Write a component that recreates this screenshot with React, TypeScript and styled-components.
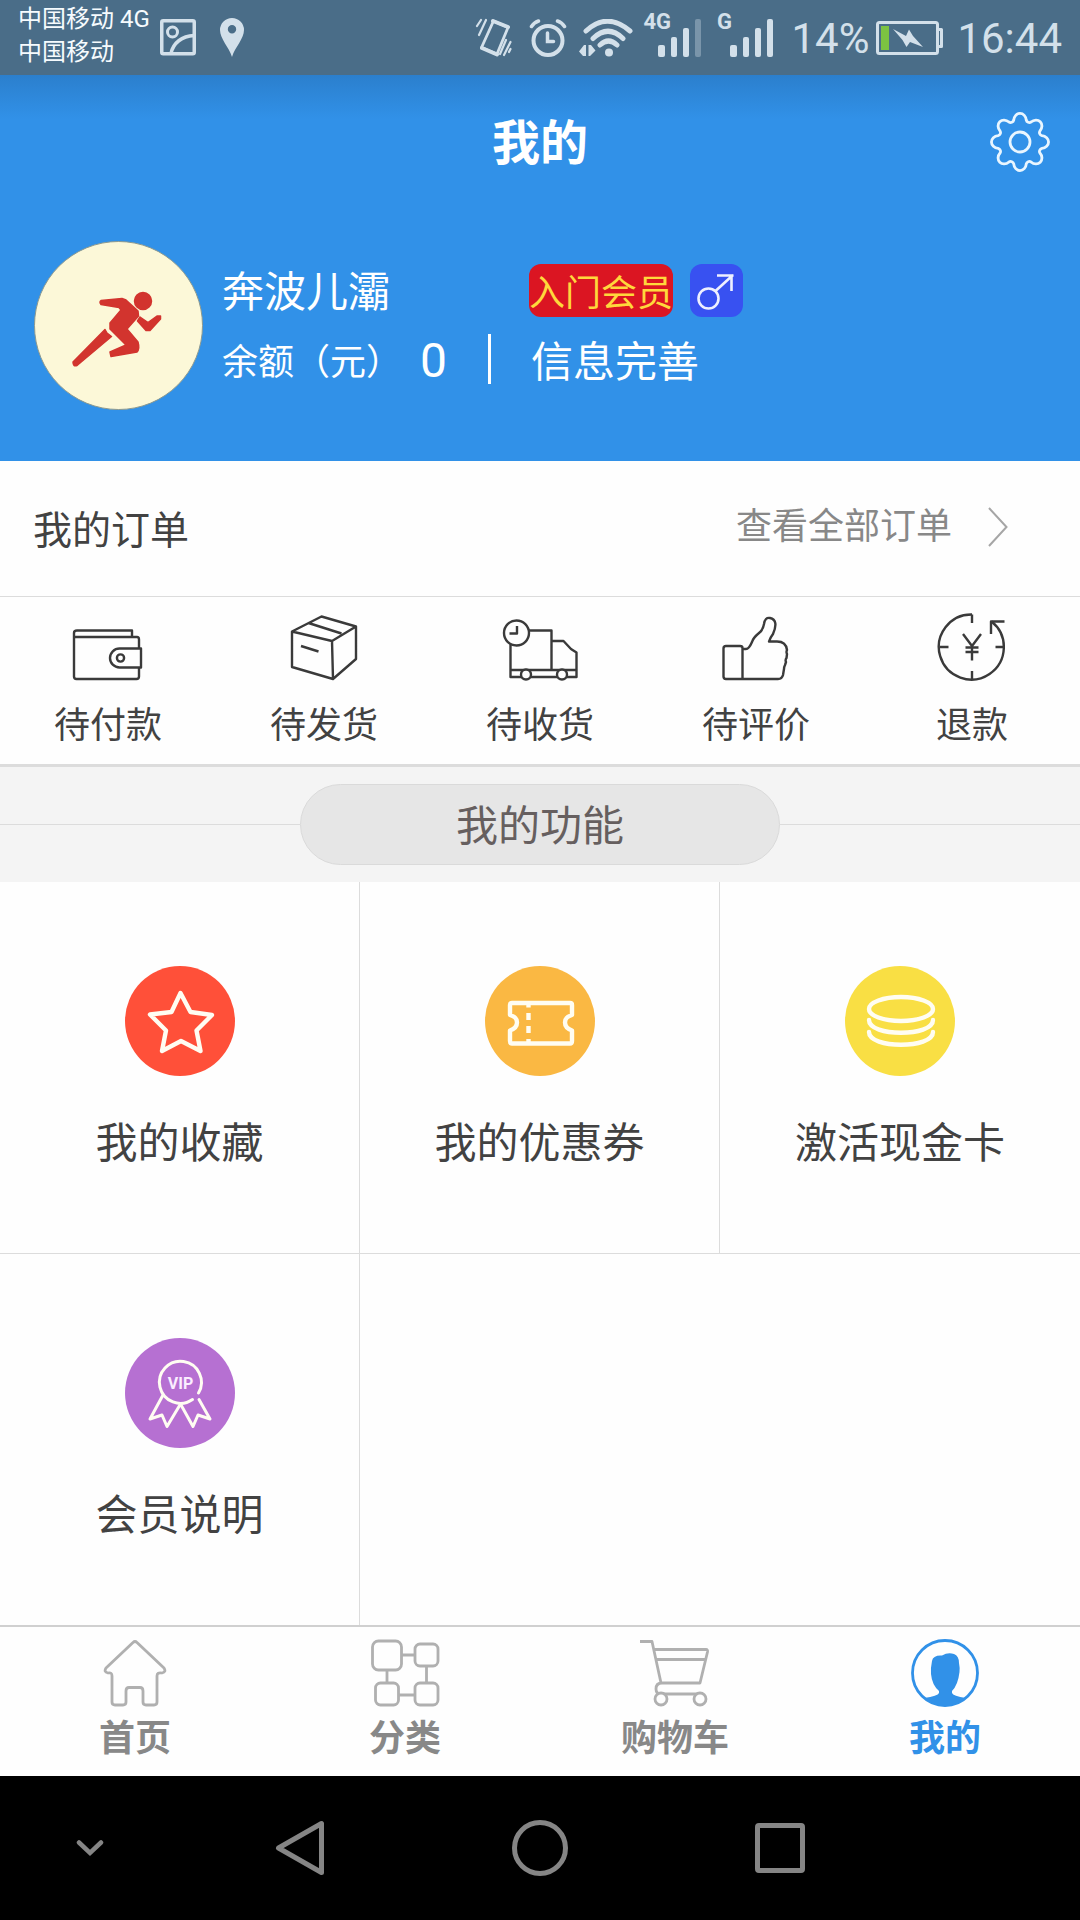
import React from "react";
import styled, { createGlobalStyle } from "styled-components";

const color = {
  brand: "#3191e8",
  ink: "#424242",
  muted: "#888888",
  line: "#dcdcdc",
  surface: "#fefefe",
  status: "#d3e0ea",
};

const GlobalStyle = createGlobalStyle`
  *, *::before, *::after { box-sizing: border-box; }
  body {
    margin: 0;
    background: ${color.surface};
    color: ${color.ink};
    font-family: Roboto, "Noto Sans CJK SC", sans-serif;
  }
  button {
    margin: 0;
    padding: 0;
    border: 0;
    background: none;
    color: inherit;
    font: inherit;
    cursor: pointer;
  }
  a { color: inherit; text-decoration: none; }
  h1, h2, p { margin: 0; font-weight: 400; }
  svg { display: block; flex: none; }
`;

const Page = styled.div`
  display: flex;
  flex-direction: column;
  min-height: 100vh;
`;

/* ---------- status bar ---------- */

const StatusBar = styled.div`
  display: flex;
  align-items: center;
  justify-content: space-between;
  height: 75px;
  padding: 0 18px;
  background: #4a6d88;
  color: ${color.status};
`;

const StatusGroup = styled.div<{ $gap: number }>`
  display: flex;
  align-items: center;
  gap: ${(p) => p.$gap}px;
`;

const Carriers = styled.div`
  padding-bottom: 4px;
  color: #f6fbfe;
  font-size: 24px;
  line-height: 33px;
  white-space: nowrap;
`;

const StatusText = styled.span`
  padding-top: 2px;
  font-size: 42px;
  line-height: 48px;
`;

const Signal = styled.div`
  position: relative;
`;

const SignalLabel = styled.span`
  position: absolute;
  top: -10px;
  left: 0;
  font-size: 22px;
  font-weight: 700;
  line-height: 26px;
`;

/* ---------- header ---------- */

const Header = styled.header`
  padding-bottom: 51px;
  background: linear-gradient(#2b7fcd, ${color.brand} 44px);
  color: #fff;
`;

const TitleBar = styled.div`
  display: grid;
  grid-template-columns: 1fr auto 1fr;
  align-items: center;
  height: 134px;
  padding: 0 29px;
`;

const Title = styled.h1`
  grid-column: 2;
  padding-top: 4px;
  font-size: 48px;
  font-weight: 700;
  line-height: 64px;
`;

const SettingsButton = styled.button`
  justify-self: end;
`;

const Profile = styled.section`
  display: flex;
  align-items: center;
  gap: 19px;
  padding: 32px 34px 0;
`;

const ProfileInfo = styled.div`
  display: grid;
  grid-template-columns: 307px auto;
  row-gap: 12px;
  align-items: center;
  padding-bottom: 2px;
`;

const UserName = styled.p`
  padding-top: 4px;
  font-size: 42px;
  line-height: 52px;
`;

const Badges = styled.div`
  display: flex;
  gap: 17px;
`;

const Level = styled.span`
  height: 53px;
  border-radius: 12px;
  background: #db1522;
  color: #ffd83c;
  font-size: 36px;
  line-height: 60px;
`;

const Gender = styled.span`
  display: grid;
  place-items: center;
  width: 53px;
  height: 53px;
  border-radius: 12px;
  background: #3851f1;
`;

const Balance = styled.p`
  display: flex;
  align-items: center;
  gap: 18px;
  height: 50px;
  margin-right: 38px;
  border-right: 3px solid #fff;
  font-size: 36px;
  white-space: nowrap;
`;

const Amount = styled.span`
  padding-top: 4px;
  font-size: 48px;
  line-height: 46px;
`;

const ProfileLink = styled.a`
  padding: 8px 0 0 2px;
  font-size: 42px;
  line-height: 48px;
`;

/* ---------- orders ---------- */

const OrdersHead = styled.div`
  display: flex;
  align-items: center;
  justify-content: space-between;
  height: 136px;
  padding: 0 72px 0 33px;
  border-bottom: 1px solid ${color.line};
`;

const OrdersTitle = styled.h2`
  padding-top: 4px;
  font-size: 39px;
  line-height: 56px;
`;

const AllOrders = styled.a`
  display: flex;
  align-items: center;
  gap: 36px;
  padding-bottom: 4px;
  color: ${color.muted};
  font-size: 36px;
  line-height: 50px;
`;

const OrderTabs = styled.nav`
  display: grid;
  grid-template-columns: repeat(5, 1fr);
  border-bottom: 3px solid ${color.line};
`;

const OrderTab = styled.a`
  display: flex;
  flex-direction: column;
  align-items: center;
  gap: 19px;
  padding: 15px 0 13px;
  font-size: 36px;
  line-height: 50px;
`;

/* ---------- features ---------- */

const Divider = styled.div`
  display: flex;
  align-items: center;
  padding: 17px 0;
  background: #f4f4f4;

  &::before,
  &::after {
    content: "";
    flex: 1;
    height: 1px;
    background: ${color.line};
  }
`;

const Pill = styled.h2`
  width: 480px;
  padding-top: 5px;
  border: 1px solid #dadada;
  border-radius: 41px;
  background: #e6e6e6;
  color: #665f5f;
  font-size: 42px;
  line-height: 74px;
  text-align: center;
`;

const Features = styled.nav`
  display: grid;
  flex: 1;
  grid-template-columns: repeat(3, 1fr);
`;

const Feature = styled.a<{ $right: boolean; $bottom: boolean }>`
  display: flex;
  flex-direction: column;
  align-items: center;
  gap: 38px;
  padding: 84px 0 79px;
  border-style: solid;
  border-color: ${color.line};
  border-width: 0 ${(p) => (p.$right ? 1 : 0)}px ${(p) => (p.$bottom ? 1 : 0)}px 0;
  font-size: 42px;
  line-height: 60px;
`;

/* ---------- bottom bars ---------- */

const TabBar = styled.nav`
  display: grid;
  grid-template-columns: repeat(4, 1fr);
  border-top: 2px solid #d0d0d0;
`;

const Tab = styled.a<{ $active?: boolean }>`
  display: flex;
  flex-direction: column;
  align-items: center;
  gap: 7px;
  padding: 12px 0;
  color: ${(p) => (p.$active ? color.brand : color.muted)};
  font-size: 36px;
  font-weight: 700;
  line-height: 50px;
`;

const SystemBar = styled.div`
  display: grid;
  grid-template-columns: 3fr 4fr 4fr 4fr 3fr;
  height: 144px;
  background: #000;
`;

const SystemButton = styled.button`
  display: grid;
  place-items: center;
`;

/* ---------- drawings ---------- */

const SignalBars = ({ inset, width, faint }: { inset: number; width: number; faint?: boolean }) => (
  <svg width={width} height="38" fill={color.status}>
    <rect x={inset} y="26" width="7" height="12" rx="2" />
    <rect x={inset + 13} y="18" width="6" height="20" rx="2" />
    <rect x={inset + 25} y="9" width="6" height="29" rx="2" />
    <rect x={inset + 37} y="0" width="6" height="38" rx="2" opacity={faint ? 0.35 : 1} />
  </svg>
);

const gearPath = (() => {
  const at = (deg: number) => {
    const t = (deg * Math.PI) / 180;
    return `${(31 + 22.8 * Math.cos(t)).toFixed(2)} ${(31 + 22.8 * Math.sin(t)).toFixed(2)}`;
  };
  let d = `M${at(-106)}`;
  for (let i = 0; i < 8; i++) {
    const a = -90 + i * 45;
    d += `A6.3 7.2 ${a + 90} 0 1 ${at(a + 16)}A3.2 3.2 0 0 0 ${at(a + 29)}`;
  }
  return d + "Z";
})();

const Gear = () => (
  <svg width="62" height="62" fill="none" stroke="#e9f6ff" strokeWidth="2.8" strokeLinejoin="round">
    <path d={gearPath} />
    <circle cx="31" cy="31" r="10" />
  </svg>
);

const Avatar = () => (
  <svg width="169" height="169" role="img" aria-label="头像">
    <circle cx="84.5" cy="84.5" r="84" fill="#fcf8d8" stroke="#8d9a90" strokeWidth="1" />
    <g fill="#d2342e" stroke="#d2342e" strokeWidth="1.5" strokeLinejoin="round">
      <circle cx="109" cy="60" r="8.5" />
      <path d="M67 59.500L88 57.500L92 59L104 70L104.500 75L93 88L104 101Q106 108 103 111L77 115.500L76 111L92 104L76 88V82L87 69L85 66.500L67 63.500Q65 61 67 59.500Z" />
      <path d="M106 76L114 81.500L123 75L126.500 75L126.500 78L116 89.500H112L103.500 80Z" />
      <path d="M71 88.500L73 92L77.500 95.500L43 124.500Q39 126 39 121Z" />
    </g>
  </svg>
);

const Male = () => (
  <svg width="53" height="53" fill="none" stroke="#eef0ff" strokeWidth="2.6">
    <circle cx="18.500" cy="34.500" r="10" />
    <path d="M25.500 27L43 11M27 11.500H43.500M41.500 27V10.500" />
  </svg>
);

const orderStroke = {
  width: 90,
  height: 70,
  fill: "none",
  stroke: "#3a3a3a",
  strokeWidth: 2.4,
  strokeLinejoin: "round" as const,
};

const Wallet = () => (
  <svg {...orderStroke}>
    <path d="M11 25V21Q11 18.500 14 18.500H69V25M11 25H74Q76 25 76 27.500V36.500M76 55.500V64.500Q76 67 73.500 67H13.500Q11 67 11 64.500V25" />
    <path d="M78 36.500H56.500A9.500 9.500 0 0 0 56.500 55.500H78Z" />
    <circle cx="57.500" cy="46" r="3.600" />
  </svg>
);

const Parcel = () => (
  <svg {...orderStroke}>
    <path d="M42.500 4.500L77 14.500V47L54 67L13 55V19.500ZM13 19.500L53 29L77 14.500M53 29L54 67M29.500 11L62.500 21.500M22 34L39.500 39.500" />
  </svg>
);

const Truck = () => (
  <svg {...orderStroke}>
    <circle cx="21.500" cy="21" r="12.500" />
    <path d="M22 14V21.500H14.500M34 18.500H56.500V58M15.500 32V65H26M36 65H62M72 65H81.500V40.500L76 37L68.500 29H56.500M15.500 58H81.500" />
    <circle cx="31" cy="62.500" r="5" fill={color.surface} />
    <circle cx="67" cy="62.500" r="5" fill={color.surface} />
  </svg>
);

const Thumb = () => (
  <svg {...orderStroke}>
    <path d="M31.500 67V36Q31.500 34 29 34H15Q12.500 34 12.500 36.500V64.500Q12.500 67 15 67H67Q71 67 72 63L73 57Q73 55 74 53L75 50Q74 48 75.500 46L76 42Q75 40 76 38Q75 29.500 66 29.500H58Q59 26 62 22Q68 8 59 6Q54 5 53 12Q52 18 48 21Q42 26 41 30Q38 37 35 37H31.500" />
  </svg>
);

const Refund = () => (
  <svg {...orderStroke}>
    <path d="M45 2.500A32.500 32.500 0 1 0 64.500 9.500" />
    <path d="M77.500 9.500H64V22M45 2.500V11M12.500 35H21.500M68.500 35H77.500M45 59V67.500M36 22L45 34L54 22M45 34V48.500M38.500 35.500H51.500M38.500 40H51.500" />
  </svg>
);

const ArrowRight = () => (
  <svg width="20" height="40" fill="none" stroke="#a6a6a6" strokeWidth="2">
    <path d="M1 1L18.500 20L1 39" />
  </svg>
);

const Disc = ({ fill, children }: { fill: string; children: React.ReactNode }) => (
  <svg width="110" height="110" fill="none" stroke="#fffdf2" strokeWidth="4.400" strokeLinejoin="round" strokeLinecap="round">
    <circle cx="55" cy="55" r="55" fill={fill} stroke="none" />
    {children}
  </svg>
);

const StarDisc = () => (
  <Disc fill="#ff5039">
    <path d="M55.500 27L65.500 46L87 49L71.500 64.500L75.500 85L56 75L37 85L41 64.500L25 48.500L46.500 46Z" />
  </Disc>
);

const CouponDisc = () => (
  <Disc fill="#fab843">
    <path d="M27 37H85Q87 37 87 39V49Q80 51 80 56.500Q80 62 87 64.500V75Q87 77.500 85 77.500H27Q25 77.500 25 75V64.500Q32 62 32 56.500Q32 51 25 49V39Q25 37 27 37Z" />
    <path d="M43.500 38V41.500M43.500 47V54M43.500 60V67M43.500 73V76" strokeLinecap="butt" />
  </Disc>
);

const CoinsDisc = () => (
  <Disc fill="#f9df44">
    <ellipse cx="56" cy="43" rx="32" ry="12" />
    <path d="M24 54C24 71 88 71 88 54M24 66C24 83 88 83 88 66" />
  </Disc>
);

const VipDisc = () => (
  <Disc fill="#b670d2">
    <g strokeWidth="3">
      <path d="M73.500 55A21 21 0 1 0 67.500 61.500" />
      <path d="M38 57L25 81L37 77L42 88.500L55.500 66L68 88.500L73 77L85 81L74 61.500" />
    </g>
    <text x="55.500" y="51" fill="#fbeeff" stroke="none" fontSize="16" fontWeight="700" textAnchor="middle" fontFamily="Roboto, sans-serif">
      VIP
    </text>
  </Disc>
);

const tabStroke = {
  width: 70,
  height: 68,
  fill: "none",
  stroke: "#b0b0b0",
  strokeWidth: 2.8,
  strokeLinejoin: "round" as const,
};

const Home = () => (
  <svg {...tabStroke}>
    <path d="M33 3.500Q35 1.500 37 3.500L64 29Q66.500 33 62 34Q57 33 57 37V63Q57 66 54 66H46Q43 66 43 63V52Q43 48.500 40 48.500H29Q26 48.500 26 52V63Q26 66 23 66H15Q12 66 12 63V37Q12 33 8 34Q3.500 33 6 29Z" />
  </svg>
);

const Category = () => (
  <svg {...tabStroke}>
    <rect x="2.500" y="2" width="29" height="29" rx="6" />
    <rect x="45" y="5" width="23" height="22" rx="5" />
    <rect x="5.500" y="44" width="23" height="22" rx="5" />
    <rect x="45" y="44" width="23" height="22" rx="5" />
    <path d="M31.500 16H45M17 31V44M56.500 27V44M28.500 56H45" />
  </svg>
);

const Cart = () => (
  <svg {...tabStroke}>
    <path d="M0 2.500H12L21 44M13.500 10.500H66Q68 10.500 67.500 13L60 44H22Q16 44 16 50Q16 55 21 55H60M16 20.500H65" />
    <circle cx="21" cy="60" r="6" fill={color.surface} />
    <circle cx="60" cy="60" r="6" fill={color.surface} />
  </svg>
);

const Person = () => (
  <svg {...tabStroke} stroke={color.brand}>
    <circle cx="35" cy="34" r="32.500" />
    <path
      fill={color.brand}
      stroke="none"
      d="M22 22Q23 16 32 16.500Q38 13 44 15Q49 17 49 24Q50 29 49.500 33Q48 46 42 52V54Q43 57 56 59Q46 67 35 67Q24 67 14 59Q28 57 29 54V52Q22 46 21 35Q20.500 29 22 22Z"
    />
  </svg>
);

/* ---------- data ---------- */

const orders = [
  { label: "待付款", Icon: Wallet },
  { label: "待发货", Icon: Parcel },
  { label: "待收货", Icon: Truck },
  { label: "待评价", Icon: Thumb },
  { label: "退款", Icon: Refund },
];

const features = [
  { label: "我的收藏", Icon: StarDisc, right: true, bottom: true },
  { label: "我的优惠券", Icon: CouponDisc, right: true, bottom: true },
  { label: "激活现金卡", Icon: CoinsDisc, right: false, bottom: true },
  { label: "会员说明", Icon: VipDisc, right: true, bottom: false },
];

const tabs = [
  { label: "首页", Icon: Home },
  { label: "分类", Icon: Category },
  { label: "购物车", Icon: Cart },
  { label: "我的", Icon: Person, active: true },
];

export default function App() {
  return (
    <Page>
      <GlobalStyle />
      <StatusBar>
        <StatusGroup $gap={10}>
          <Carriers>
            <div>中国移动 4G</div>
            <div>中国移动</div>
          </Carriers>
          <StatusGroup $gap={24}>
            <svg width="36" height="37" fill="none" stroke={color.status} strokeWidth="3.500">
              <rect x="1.750" y="1.750" width="32.500" height="33" rx="1.500" />
              <circle cx="12.500" cy="13" r="5" strokeWidth="3" />
              <path d="M11 34.500C13 24 22 17 34 16.500" strokeWidth="3.500" />
            </svg>
            <svg width="24" height="39" fill={color.status}>
              <path
                fillRule="evenodd"
                d="M12 0A12 12 0 0 1 24 12C24 21 15 29 12 39C9 29 0 21 0 12A12 12 0 0 1 12 0ZM12 7A4.200 4.200 0 1 0 12 15.400A4.200 4.200 0 1 0 12 7Z"
              />
            </svg>
          </StatusGroup>
        </StatusGroup>

        <StatusGroup $gap={12}>
          <StatusGroup $gap={10}>
            <svg width="42" height="40" fill="none" stroke={color.status} strokeWidth="2.800" strokeLinecap="round" strokeLinejoin="round">
              <path d="M18.500 3L33 9.500L22 36L6.500 29.500Z" />
              <path d="M18 3L33 9M7 30L22 36.500" strokeWidth="4" />
              <path d="M11 2L4 17M6 2L2 8M31 22L25 36M35.500 24L29 37M35.500 31L34 34" strokeWidth="2.200" />
            </svg>
            <svg width="42" height="38" fill="none" stroke={color.status} strokeWidth="4" strokeLinecap="round">
              <circle cx="21" cy="21.500" r="14.500" />
              <path d="M20.500 14V22.500H26.500" strokeWidth="3.500" />
              <path d="M4.500 7.500Q7 3.500 11.500 2M37.500 7.500Q35 3.500 30.500 2" strokeWidth="3.500" />
            </svg>
            <svg width="54" height="38" fill="none" stroke={color.status} strokeWidth="5" strokeLinecap="round">
              <path d="M7 12Q28 -7.500 51 12M14 19.500Q29 5 44 19.500M21 26Q29.500 18 38 26" />
              <circle cx="30" cy="33.500" r="4" fill={color.status} stroke="none" />
              <path d="M7 26V37H4L0 32.500L5 26ZM9.500 26V37H11L16.500 31.500L12 26Z" fill={color.status} stroke="none" />
            </svg>
            <Signal>
              <SignalLabel>4G</SignalLabel>
              <SignalBars inset={15} width={58} faint />
            </Signal>
            <Signal>
              <SignalLabel>&nbsp;G</SignalLabel>
              <SignalBars inset={19} width={70} />
            </Signal>
            <StatusGroup $gap={6}>
              <StatusText>14%</StatusText>
              <svg width="70" height="34" fill="none" stroke={color.status} strokeWidth="3">
                <rect x="2.500" y="1.500" width="60" height="31" rx="2" />
                <path d="M64 8.500H66.500V25.500H64" strokeLinejoin="round" />
                <rect x="6" y="5" width="8" height="24" fill="#7cc242" stroke="none" />
                <path d="M18 8L31 15L34 8.500L38 15L48 26L35 21L31.500 26L27.500 19Z" fill={color.status} stroke="none" />
              </svg>
            </StatusGroup>
          </StatusGroup>
          <StatusText>16:44</StatusText>
        </StatusGroup>
      </StatusBar>

      <Header>
        <TitleBar>
          <Title>我的</Title>
          <SettingsButton aria-label="设置">
            <Gear />
          </SettingsButton>
        </TitleBar>
        <Profile>
          <Avatar />
          <ProfileInfo>
            <UserName>奔波儿灞</UserName>
            <Badges>
              <Level>入门会员</Level>
              <Gender>
                <Male />
              </Gender>
            </Badges>
            <Balance>
              余额（元）<Amount>0</Amount>
            </Balance>
            <ProfileLink href="#info">信息完善</ProfileLink>
          </ProfileInfo>
        </Profile>
      </Header>

      <section>
        <OrdersHead>
          <OrdersTitle>我的订单</OrdersTitle>
          <AllOrders href="#orders">
            查看全部订单
            <ArrowRight />
          </AllOrders>
        </OrdersHead>
        <OrderTabs>
          {orders.map(({ label, Icon }) => (
            <OrderTab key={label} href="#orders">
              <Icon />
              {label}
            </OrderTab>
          ))}
        </OrderTabs>
      </section>

      <Divider>
        <Pill>我的功能</Pill>
      </Divider>
      <Features>
        {features.map(({ label, Icon, right, bottom }) => (
          <Feature key={label} href="#feature" $right={right} $bottom={bottom}>
            <Icon />
            {label}
          </Feature>
        ))}
      </Features>

      <TabBar>
        {tabs.map(({ label, Icon, active }) => (
          <Tab key={label} href="#tab" $active={active}>
            <Icon />
            {label}
          </Tab>
        ))}
      </TabBar>

      <SystemBar>
        <SystemButton aria-label="收起">
          <svg width="28" height="18" fill="none" stroke="#858585" strokeWidth="4.500" strokeLinecap="round">
            <path d="M3 3.500L14 14L25 3.500" />
          </svg>
        </SystemButton>
        <SystemButton aria-label="返回">
          <svg width="50" height="56" fill="none" stroke="#858585" strokeWidth="5" strokeLinejoin="round">
            <path d="M46.500 3.500V52.500L3.500 28Z" />
          </svg>
        </SystemButton>
        <SystemButton aria-label="主屏幕">
          <svg width="56" height="56" fill="none" stroke="#858585" strokeWidth="5">
            <circle cx="28" cy="28" r="25.500" />
          </svg>
        </SystemButton>
        <SystemButton aria-label="最近任务">
          <svg width="50" height="50" fill="none" stroke="#858585" strokeWidth="5">
            <rect x="2.500" y="2.500" width="45" height="45" rx="1.500" />
          </svg>
        </SystemButton>
      </SystemBar>
    </Page>
  );
}
